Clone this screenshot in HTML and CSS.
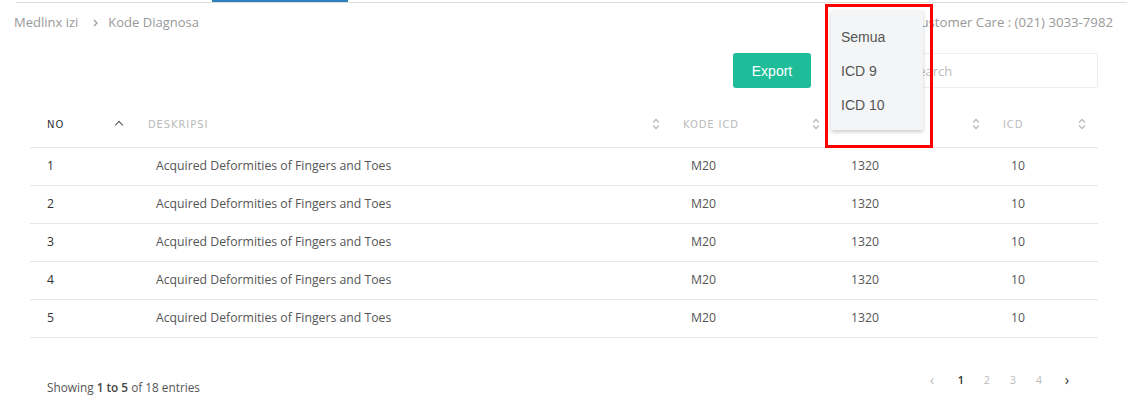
FILE: index.html
```html
<!DOCTYPE html>
<html>
<head>
<meta charset="utf-8">
<link rel="stylesheet" href="styles.css">
</head>
<body>
<div class="page">
  <div class="topline"><span class="tab-active"></span></div>
  <div class="crumbbar">
    <div class="crumbs"><span>Medlinx izi</span><svg class="sep" viewBox="0 0 5 8" width="5" height="8"><path d="M1 1 L4 4 L1 7" fill="none" stroke="#999" stroke-width="1.2"/></svg><span>Kode Diagnosa</span></div>
    <div class="care">Customer Care : (021) 3033-7982</div>
  </div>
  <div class="toolbar">
    <button class="btn-export">Export</button>
    <div class="select-wrap">
      <div class="menu">
        <div class="menu-item">Semua</div>
        <div class="menu-item">ICD 9</div>
        <div class="menu-item">ICD 10</div>
      </div>
      <div class="highlight"></div>
    </div>
    <input class="search" type="text" placeholder="Search">
  </div>
  <table class="grid">
    <thead>
      <tr>
        <th class="c-no"><div class="th"><span class="th-dark">NO</span><span class="caret-up"></span></div></th>
        <th class="c-desc"><div class="th"><span>DESKRIPSI</span><svg class="sort" viewBox="0 0 8 12" width="8" height="12"><path d="M1 4.5 L4 1.5 L7 4.5 M1 7.5 L4 10.5 L7 7.5" fill="none" stroke="#bbb" stroke-width="1.3"/></svg></div></th>
        <th class="c-kode"><div class="th"><span>KODE ICD</span><svg class="sort" viewBox="0 0 8 12" width="8" height="12"><path d="M1 4.5 L4 1.5 L7 4.5 M1 7.5 L4 10.5 L7 7.5" fill="none" stroke="#bbb" stroke-width="1.3"/></svg></div></th>
        <th class="c-num"><div class="th"><span>KODE</span><svg class="sort" viewBox="0 0 8 12" width="8" height="12"><path d="M1 4.5 L4 1.5 L7 4.5 M1 7.5 L4 10.5 L7 7.5" fill="none" stroke="#bbb" stroke-width="1.3"/></svg></div></th>
        <th class="c-icd"><div class="th"><span>ICD</span><svg class="sort" viewBox="0 0 8 12" width="8" height="12"><path d="M1 4.5 L4 1.5 L7 4.5 M1 7.5 L4 10.5 L7 7.5" fill="none" stroke="#bbb" stroke-width="1.3"/></svg></div></th>
      </tr>
    </thead>
    <tbody>
      <tr><td class="no">1</td><td>Acquired Deformities of Fingers and Toes</td><td>M20</td><td>1320</td><td>10</td></tr>
      <tr><td class="no">2</td><td>Acquired Deformities of Fingers and Toes</td><td>M20</td><td>1320</td><td>10</td></tr>
      <tr><td class="no">3</td><td>Acquired Deformities of Fingers and Toes</td><td>M20</td><td>1320</td><td>10</td></tr>
      <tr><td class="no">4</td><td>Acquired Deformities of Fingers and Toes</td><td>M20</td><td>1320</td><td>10</td></tr>
      <tr><td class="no">5</td><td>Acquired Deformities of Fingers and Toes</td><td>M20</td><td>1320</td><td>10</td></tr>
    </tbody>
  </table>
  <div class="footer">
    <div class="info">Showing <b>1 to 5</b> of 18 entries</div>
    <div class="pager">
      <span class="pg arrow prev">&#x2039;</span>
      <span class="pg current">1</span>
      <span class="pg">2</span>
      <span class="pg">3</span>
      <span class="pg">4</span>
      <span class="pg arrow next">&#x203A;</span>
    </div>
  </div>
</div>
</body>
</html>
```
FILE: styles.css
```css
* { box-sizing: border-box; }
html, body { margin: 0; padding: 0; background: #fff; }
body { font-family: "Open Sans", "Liberation Sans", sans-serif; color: #555; width: 1138px; height: 406px; overflow: hidden; }

.topline { margin: 0 11px 0 16px; height: 3px; border-bottom: 1px solid #dedede; display: flex; }
.tab-active { margin-left: 196px; width: 136px; height: 2px; background: #2d82be; }

.crumbbar { display: flex; justify-content: space-between; align-items: center; height: 38px; padding: 0 25px 0 14px; font-size: 13px; color: #999; }
.crumbs { display: flex; align-items: center; }
.crumbs .sep { display: block; margin: 1px 10px 0 15px; }
.care { color: #999; font-size: 13.2px; }

.toolbar { display: flex; justify-content: flex-end; align-items: center; padding: 12px 40px 0 0; height: 47px; }
.btn-export { width: 78px; height: 35px; border: none; border-radius: 3px; background: #1fbc99; color: #fff; font-family: "Liberation Sans", Arial, sans-serif; font-size: 14px; padding: 0; }
.select-wrap { position: relative; width: 87px; height: 35px; }
.menu { position: absolute; left: 20px; top: -43px; width: 92px; height: 120px; background: #f4f5f7; box-shadow: 0 2px 4px rgba(0,0,0,0.2); padding-top: 16px; z-index: 2; }
.menu-item { font-family: "Liberation Sans", Arial, sans-serif; font-size: 14px; color: #555; height: 34px; line-height: 22px; padding-left: 10px; }
.highlight { position: absolute; left: 14px; top: -49px; width: 108px; height: 144px; border: 3px solid #f00; z-index: 3; }
.search { width: 200px; height: 35px; border: 1px solid #eee; border-radius: 2px; padding: 0 12px; font-size: 13px; font-family: "Open Sans", sans-serif; outline: none; }
.search::placeholder { color: #bbb; }

.grid { margin: 14px 0 0 30px; width: 1068px; border-collapse: collapse; table-layout: fixed; }
.grid th { height: 45px; border-bottom: 1px solid #e6e6e6; font-weight: normal; padding: 0 13px 0 10px; text-align: left; }
.th { display: flex; justify-content: space-between; align-items: center; font-family: "DejaVu Sans", sans-serif; font-size: 10px; letter-spacing: 0.9px; color: #bbb; }
.th-dark { color: #333; }
.c-no { width: 108px; }
.grid th.c-no { padding-left: 17px; padding-right: 16px; }
.c-desc { width: 535px; }
.c-kode { width: 160px; }
.c-num { width: 160px; }
.c-num .th span { visibility: hidden; }
.c-icd { width: 105px; }
.grid th.c-icd { padding-right: 12px; }
.caret-up { width: 6px; height: 6px; border-left: 1.5px solid #555; border-top: 1.5px solid #555; transform: rotate(45deg); margin-top: 2px; }
.sort { display: block; }

.grid td { height: 38px; border-bottom: 1px solid #e6e6e6; padding: 0 0 1px 18px; font-size: 12.25px; color: #555; }
.grid td.no { padding-left: 17px; color: #333; }

.footer { display: flex; justify-content: space-between; align-items: center; padding: 26px 58px 0 47px; }
.info { font-size: 11.8px; color: #555; margin-top: 15px; }
.info b { color: #444; font-weight: 600; }
.pager { display: flex; align-items: center; font-size: 11px; color: #bbb; }
.pg { width: 26px; text-align: center; }
.pg.arrow { font-size: 15px; }
.pg.prev { margin-right: 3px; }
.pg.next { margin-left: 2px; color: #333; }
.pg.current { color: #333; font-weight: 600; }
```
